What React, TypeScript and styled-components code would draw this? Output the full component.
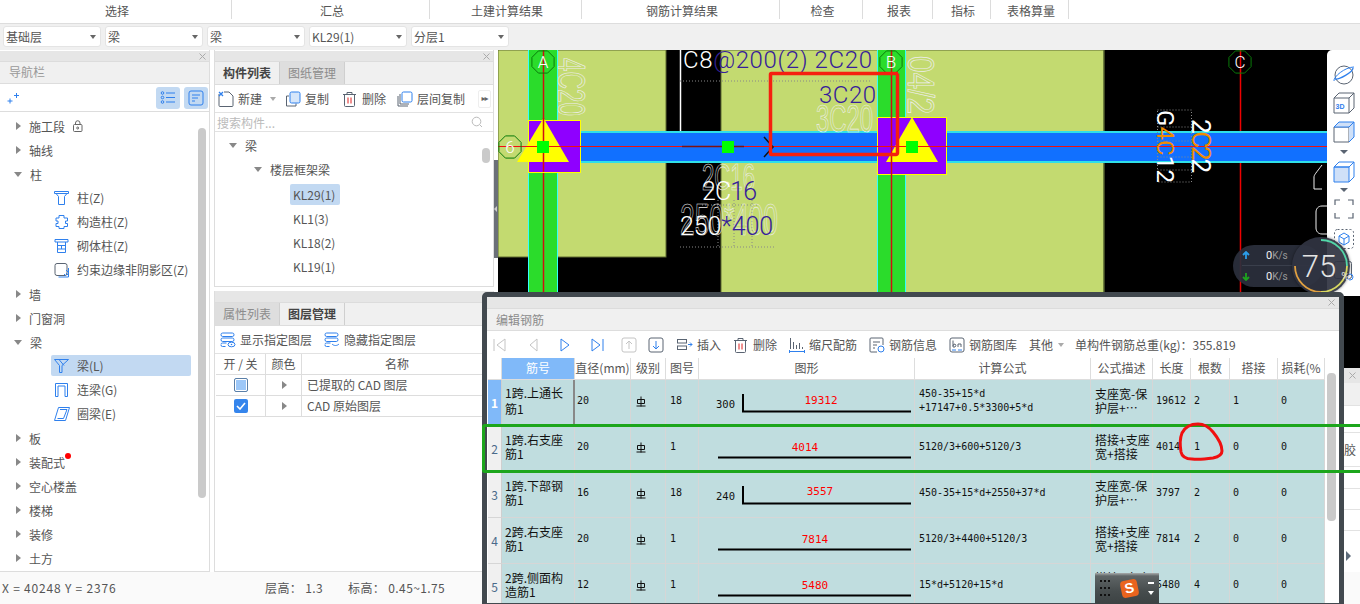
import React from "react";
import styled, { createGlobalStyle } from "styled-components";

const Global = createGlobalStyle`
  html, body { margin: 0; padding: 0; background: #fff; }
  * { box-sizing: border-box; }
  body { font-family: "Noto Sans CJK SC", "Liberation Sans", sans-serif; font-size: 12px; color: #555; }
`;

const Page = styled.div`
  position: relative; width: 1360px; height: 604px; overflow: hidden;
  display: flex; flex-direction: column; background: #fff;
`;
const TopBar = styled.div`display: flex; height: 24px; background: #fff; border-bottom: 1px solid #ddd; flex: none;`;
const TopCell = styled.div<{ $w: number }>`
  width: ${p => p.$w}px; height: 19px; line-height: 22px; text-align: center; color: #555; padding-left: 3px;
  border-right: 1px solid #dcdcdc; font-size: 12px;
`;
const SelectBar = styled.div`display: flex; gap: 4px; height: 26px; padding: 2px 3px 0; background: #f0f0f0; flex: none;`;
const Select = styled.div`
  position: relative; width: 98px; height: 21px; background: #fff; border-radius: 3px; border: 1px solid #e4e4e4;
  line-height: 19px; padding-left: 2px; font-size: 12px; color: #555;
  &::after { content: ""; position: absolute; right: 4px; top: 8px; border: 3px solid transparent; border-top: 4px solid #666; border-bottom: 0; }
`;
const Main = styled.div`display: flex; height: 522px; flex: none;`;
const Panel = styled.div`display: flex; flex-direction: column; border: 1px solid #ddd; border-top: 0; background: #fff; overflow: hidden;`;
const LeftPanel = styled(Panel)`width: 210px; border-left: 0; flex: none; position: relative;`;
const MidCol = styled.div`width: 280px; margin-left: 4px; display: flex; flex-direction: column; gap: 4px; flex: none;`;
const UpperPanel = styled(Panel)`height: 237px; position: relative; flex: none;`;
const LowerPanel = styled(Panel)`flex: 1;`;
const Strip = styled.div<{ $flush?: boolean }>`
  display: flex; align-items: center; justify-content: flex-end; height: ${p => (p.$flush ? 12 : 11)}px; margin-top: ${p => (p.$flush ? 0 : 1)}px;
  background: #e6e6e6; border-bottom: 1px solid #dcdcdc; flex: none; padding-right: 3px;
`;
const CloseX = () => (
  <svg width="7" height="7" viewBox="0 0 7 7" style={{ display: "block", flex: "none" }}>
    <path d="M.5.5l6 6M6.500.5l-6 6" stroke="#aaa" />
  </svg>
);
const NavTitle = styled.div`height: 22px; background: #f0f0f0; border-bottom: 1px solid #ddd; padding-left: 9px; line-height: 20px; color: #999; flex: none;`;
const NavTools = styled.div`display: flex; align-items: center; height: 28px; padding: 0 1px 0 6px; border-bottom: 1px solid #ddd; flex: none;`;
const NavToggle = styled.div<{ $ml?: number }>`
  width: 24px; height: 22px; margin-left: ${p => p.$ml ?? 4}px; background: #c2d9f2; border-radius: 3px;
  display: flex; align-items: center; justify-content: center;
`;
const Tree = styled.div<{ $top: number }>`padding-top: ${p => p.$top}px; flex: 1;`;
const GroupRow = styled.div<{ $indent?: number }>`
  display: flex; align-items: center; gap: 8px; height: 24px; padding-left: ${p => p.$indent ?? 14}px; color: #555;
`;
const Caret = styled.span<{ $open?: boolean }>`
  width: 7px; flex: none; height: 0; display: block;
  ${p => p.$open
    ? "border-left: 4px solid transparent; border-right: 4px solid transparent; border-top: 5px solid #888;"
    : "border-top: 4px solid transparent; border-bottom: 4px solid transparent; border-left: 5px solid #888; margin-left: 2px; width: 5px;"}
`;
const ChildWrap = styled.div<{ $left?: number; $pt?: number }>`height: 24px; padding: ${p => p.$pt ?? 1}px 0 0 ${p => p.$left ?? 51}px;`;
const Chip = styled.div<{ $on?: boolean; $w?: number }>`
  display: flex; align-items: center; gap: 7px; width: ${p => p.$w ?? 140}px; height: 21px; padding-left: 3px; border-radius: 2px;
  background: ${p => (p.$on ? "#c2d9f2" : "transparent")};
`;
const Dotted = styled.span`
  position: relative;
  &::after { content: ""; position: absolute; right: -6px; top: -1px; width: 6px; height: 6px; border-radius: 50%; background: #f00; }
`;
const Scroll = styled.div<{ $x: number; $y: number; $h: number }>`
  position: absolute; left: ${p => p.$x}px; top: ${p => p.$y}px; width: 8px; height: ${p => p.$h}px; border-radius: 4px; background: #cacaca;
`;
const Tabs = styled.div`display: flex; height: 23px; background: #f0f0f0; border-bottom: 1px solid #ddd; flex: none;`;
const Tab = styled.div<{ $on?: boolean }>`
  width: 65px; height: 22px; text-align: center; line-height: 21px; font-size: 12px;
  background: ${p => (p.$on ? "#f0f0f0" : "#dedede")}; color: ${p => (p.$on ? "#444" : "#8c8c8c")};
  font-weight: ${p => (p.$on ? 700 : 400)}; border-right: 1px solid #cfcfcf;
`;
const Toolbar = styled.div<{ $h: number; $plain?: boolean }>`
  display: flex; align-items: center; height: ${p => p.$h}px; background: #fff; flex: none; color: #555;
  border-bottom: ${p => (p.$plain ? "0" : "1px solid #e2e2e2")};
`;
const ToolItem = styled.div<{ $ml?: number }>`display: flex; align-items: center; gap: 4px; margin-left: ${p => p.$ml ?? 0}px; white-space: nowrap; flex: none;`;
const SmallCaret = styled.span<{ $ml: number }>`
  margin-left: ${p => p.$ml}px; flex: none; border-left: 3px solid transparent; border-right: 3px solid transparent; border-top: 4px solid #aaa;
`;
const MoreBtn = styled.div`
  margin-left: 13px; width: 13px; height: 18px; border: 1px solid #eee; border-radius: 2px; font-size: 8px; line-height: 16px; text-align: center; color: #666;
  font-family: "DejaVu Sans", sans-serif; letter-spacing: -1px; flex: none;
`;
const Search = styled.div`
  display: flex; align-items: center; justify-content: space-between; height: 19px; padding: 0 10px 0 2px; border-bottom: 1px solid #e2e2e2; color: #bbb; flex: none;
`;
const LayerGrid = styled.div`display: grid; grid-template-columns: 50px 36px 1fr; padding-left: 1px;`;
const LayerCell = styled.div<{ $center?: boolean }>`
  height: 21px; display: flex; align-items: center; justify-content: ${p => (p.$center ? "center" : "flex-start")};
  padding: 0 0 1px ${p => (p.$center ? 0 : 5)}px; border-right: 1px solid #ddd; border-bottom: 1px solid #ddd; color: #555; white-space: pre;
`;
const CheckBox = styled.span<{ $on?: boolean }>`
  width: 14px; height: 14px; border-radius: 2px; display: flex; align-items: center; justify-content: center;
  background: ${p => (p.$on ? "#3585ec" : "#9cc7f8")}; border: ${p => (p.$on ? "0" : "1px solid #5a7fa8")};
  ${p => (p.$on ? "" : "box-shadow: inset 0 0 0 1px #fff;")}
`;
const Divider = styled.div`width: 4px; flex: none; height: 100%;`;
const Handle = styled.div`
  width: 4px; height: 98px; margin-top: 110px; background: #6b7078; display: flex; align-items: center;
  &::before { content: ""; border-top: 3px solid transparent; border-bottom: 3px solid transparent; border-right: 3px solid #ccc; }
`;
const RightCol = styled.div`flex: 1; display: flex; flex-direction: column; min-width: 0; position: relative;`;
const CanvasSvg = styled.svg`display: block; width: 862px; height: 318px; background: #000; flex: none;`;
const SidePanel = styled.div`flex: 1; background: #fff; padding-left: 846px; display: flex; flex-direction: column;`;
const SideStrip = styled.div`height: 15px; background: #e6e6e6; display: flex; align-items: center; justify-content: center; flex: none;`;
const SideHead = styled.div`height: 23px; background: #f0f0f0; border-bottom: 1px solid #e2e2e2; flex: none;`;
const SideRow = styled.div<{ $h: number }>`
  height: ${p => p.$h}px; border-bottom: 1px solid #e2e2e2; font-size: 12px; color: #555; white-space: nowrap; overflow: hidden; padding-top: 9px; line-height: 16px; flex: none;
`;
const SideCaret = styled.span`display: block; margin: 20px 0 0 2px; width: 0; border-top: 5px solid transparent; border-bottom: 5px solid transparent; border-left: 5px solid #5d6b7a;`;
const SideToolbar = styled.div`
  position: absolute; right: 0; top: 0; width: 33px; height: 246px; background: #fff; border-radius: 5px 0 0 5px;
  display: flex; flex-direction: column; align-items: center; padding-top: 14px;
`;
const ToolSlot = styled.div<{ $h: number }>`height: ${p => p.$h}px; flex: none; display: flex; align-items: flex-start; justify-content: center;`;
const TinyDown = styled.span`display: block; width: 0; border-left: 4px solid transparent; border-right: 4px solid transparent; border-top: 4px solid #5a6472;`;
const Speed = styled.div`
  position: absolute; left: 735px; top: 195px; width: 90px; height: 42px; border-radius: 21px; background: rgba(43,47,60,.93);
  display: flex; flex-direction: column; padding-left: 9px; color: #999; font-size: 10px;
`;
const SpeedRow = styled.div<{ $line?: boolean }>`
  height: 21px; display: flex; align-items: center; gap: 16px; ${p => (p.$line ? "border-bottom: 1px solid #3a3f4c;" : "")}
`;
const SpeedVal = styled.span`color: #999; font-family: "Roboto", sans-serif; b { color: #eee; font-weight: 400; font-size: 11px; }`;
const Gauge = styled.div`
  position: absolute; left: 794px; top: 187px; width: 58px; height: 58px; border-radius: 50%; background: rgba(48,52,66,.93);
  box-shadow: 0 0 3px rgba(0,0,0,.5);
  display: flex; align-items: center; justify-content: center;
`;
const GaugeText = styled.div`
  position: relative; color: #e4e4e4; font: 300 31px/1 "Roboto", sans-serif; padding-right: 4px;
  span { position: absolute; right: -9px; bottom: 0; font-size: 11px; font-weight: 400; }
`;
const GaugeRing = styled.svg`position: absolute; inset: 0;`;
const Status = styled.div`
  height: 32px; flex: none; background: #fafafa; display: flex; align-items: center; color: #555; font-size: 12px; letter-spacing: .4px; white-space: pre; padding: 0 0 2px 2px;
`;
const StatusItem = styled.span<{ $w: number; $wide?: boolean }>`width: ${p => p.$w}px; flex: none; ${p => (p.$wide ? "letter-spacing: .8px;" : "")}`;

const Dialog = styled.div`
  position: absolute; left: 482px; top: 292px; width: 862px; height: 312px; background: #fff; overflow: hidden;
  border: 5px solid #42494f; border-bottom-width: 1px; border-radius: 5px 5px 0 0; display: flex; flex-direction: column;
`;
const DialogStrip = styled.div`display: flex; align-items: center; justify-content: flex-end; height: 12px; background: #e6e6e6; border-bottom: 1px solid #dcdcdc; padding-right: 4px; flex: none;`;
const DialogTitle = styled.div`height: 22px; background: #f0f0f0; border-bottom: 1px solid #ddd; padding-left: 9px; line-height: 22px; color: #8c8c8c; flex: none;`;
const GridRow = styled.div<{ $h: number }>`
  display: grid; height: ${p => p.$h}px; flex: none; margin-left: 1px; width: 837px;
  grid-template-columns: 14px 73px 56px 35px 33px 216px 176px 62px 38px 39px 48px 47px;
`;
const Th = styled.div<{ $on?: boolean }>`
  background: ${p => (p.$on ? "#80b9f9" : "#fff")}; color: ${p => (p.$on ? "#fff" : "#555")};
  border-right: 1px solid #ddd; border-bottom: 1px solid #ddd; text-align: center; line-height: 20px; white-space: nowrap; overflow: hidden; font-size: 12px;
`;
const RowHead = styled.div<{ $on?: boolean }>`
  background: ${p => (p.$on ? "#80b9f9" : "#f0f0f0")}; color: ${p => (p.$on ? "#fff" : "#4a6a8a")}; font-weight: ${p => (p.$on ? 700 : 400)};
  display: flex; align-items: center; justify-content: center; border-right: 1px solid #cfcfcf; border-bottom: 1px solid #d6d6d6; font-size: 12px;
`;
const Td = styled.div<{ $pl?: number; $mark?: boolean; $lh?: number; $flat?: boolean }>`
  background: #c0dddf; border-right: 1px solid #d6d6d6; border-bottom: 1px solid #d6d6d6; color: #111;
  display: flex; flex-direction: column; justify-content: center; align-items: flex-start; padding: 0 0 ${p => (p.$flat ? 0 : 3)}px ${p => p.$pl ?? 3}px;
  font-size: 12px; line-height: ${p => p.$lh ?? 14}px; white-space: nowrap; overflow: hidden;
  ${p => (p.$mark ? "border-right: 2px solid #888;" : "")}
`;
const Mono = styled.span`font-family: "DejaVu Sans Mono", monospace; font-size: 10px; letter-spacing: 0;`;
const ShapeSvg = styled.svg`display: block;`;
const DlgScroll = styled(Scroll)`width: 9px; border-radius: 4px;`;
const Overlay = styled.svg`position: absolute; left: 0; top: 0; pointer-events: none;`;
const Sogou = styled.div`
  position: absolute; left: 1095px; top: 573px; width: 64px; height: 31px; display: flex; align-items: center;
  background: linear-gradient(#a8acac 0, #5f6566 3px, #464c4d 60%, #3c4243);
`;
const SogouLogo = styled.div`
  width: 17px; height: 17px; margin-left: 7px; background: #e9641e; border-radius: 4px; transform: rotate(-12deg); color: #fff; font: 700 14px/17px "Liberation Sans", sans-serif; text-align: center; flex: none;
`;
const SogouSide = styled.div`margin-left: 10px; display: flex; flex-direction: column; gap: 7px; align-items: center;`;

const B = "#2f80ed", D = "#5a6472";
const Ico = ({ children, w = 16, h = 16 }: { children: React.ReactNode; w?: number; h?: number }) => (
  <svg width={w} height={h} viewBox={`0 0 ${w} ${h}`} fill="none" strokeWidth={1} style={{ flex: "none", display: "block" }}>{children}</svg>
);

const Sp = () => <Ico><path d="M10.500 3v5M8 5.500h5M4 8.500v5M1.500 11h5" stroke={B} /></Ico>;
const ListI = () => <Ico><circle cx="2.500" cy="3" r="1.300" stroke={B} /><circle cx="2.500" cy="7.500" r="1.300" stroke={B} /><circle cx="2.500" cy="12" r="1.300" stroke={B} /><path d="M6 3h9M6 7.500h9M6 12h9" stroke={B} /></Ico>;
const DetailI = () => <Ico><rect x="1" y="1" width="14" height="14" rx="2" stroke={B} /><path d="M4 5h8M4 8h6M4 11h3" stroke={B} /></Ico>;
const ColI = () => <Ico><path d="M.5 1.500h14v2h-14zM2 3.500l2.500 3v8h6v-8l2.500-3" stroke={B} /></Ico>;
const StructI = () => <Ico><path d="M5 1.500h5v2.500h3.500v3h-2v2.500h2v3H10v2H5v-2H2v-3h2V7H2V4h3z" stroke={B} /></Ico>;
const BrickI = () => <Ico><path d="M1 1.500h13v2.500H1zM3.500 4v10.500h8V4M3.500 7.500h8M3.500 11h8M7.500 7.500V11" stroke={B} /></Ico>;
const EdgeI = () => <Ico><rect x="1" y="1.500" width="12" height="12" rx="2" stroke={D} /><path d="M14.500 6v9H4.500M12 11l2 2M10 12l2 2M12 8l2 2" stroke={B} /></Ico>;
const BeamI = () => <Ico><path d="M.5 1.500h14l-6.500 6v7H5.500V7.500zM5 1.500l5 6" stroke={B} /></Ico>;
const LinkI = () => <Ico><path d="M1.500 14.500V1.500h12v13h-2.500V4H4v10.500z" stroke={B} /></Ico>;
const RingI = () => <Ico><path d="M4.500 1.500h11l-4 13H.500zM6 3.500h7L9.500 12.500H3.500" stroke={B} /></Ico>;
const LockI = () => <Ico w={10} h={12}><rect x=".5" y="4.500" width="8.500" height="7" rx="1" stroke="#666" /><path d="M2.500 4.500V3a2.200 2.200 0 0 1 4.500 0v1.500" stroke="#666" /><circle cx="4.700" cy="8" r="1" stroke="#666" /></Ico>;
const NewI = () => <Ico><path d="M1 3v11.500a1 1 0 0 0 1 1h12a1 1 0 0 0 1-1V5l-4-4H6" stroke={D} /><path d="M1 1l4 4M5 1L1 5" stroke={B} strokeWidth={1.300} /></Ico>;
const CopyI = () => <Ico><path d="M4 5H1.500v10h9.500v-2.500" stroke={D} /><rect x="5" y="1" width="10" height="11" rx="1.500" fill="#d6e6fa" stroke={B} /></Ico>;
const TrashI = () => <Ico><path d="M1 3.500h13M5 3.500V1.500h5v2M2.500 3.500v11a1 1 0 0 0 1 1h8a1 1 0 0 0 1-1v-11" stroke={D} /><path d="M6 6.500v6M9 6.500v6" stroke="#e02020" /></Ico>;
const LayerCopyI = () => <Ico><path d="M1 5v10h10M3 3v10h9" stroke={D} /><rect x="5" y="1" width="10" height="10" rx="1.500" stroke={B} /></Ico>;
const SearchI = () => <Ico w={12} h={12}><circle cx="5.500" cy="5.500" r="4.300" stroke="#bbb" /><path d="M8.700 8.700l2.300 2.300" stroke="#bbb" /></Ico>;
const ShowI = ({ hide }: { hide?: boolean }) => (
  <Ico>
    <rect x="1" y="1" width="13" height="3.500" rx="1.700" stroke={B} />
    <rect x="1" y="6" width="13" height="3.500" rx="1.700" stroke={B} />
    <path d="M1 12.500a1.500 1.500 0 0 1 1.500-1.500h4" stroke={B} /><path d="M1 13a1.500 1.500 0 0 0 1.500 1.500h3" stroke={B} />
    {hide ? <path d="M8 12c2 2 5 2 7 0" stroke={B} /> : <><ellipse cx="11.500" cy="12.500" rx="3.500" ry="2.300" stroke={B} /><circle cx="11.500" cy="12.500" r=".8" fill={B} /></>}
  </Ico>
);
const G = "#c4c4c4";
const FirstI = ({ c }: { c: string }) => <Ico><path d="M2 2v12M13 2L5 8l8 6z" stroke={c} /></Ico>;
const PrevI = ({ c }: { c: string }) => <Ico><path d="M11 2L4 8l7 6z" stroke={c} /></Ico>;
const NextI = ({ c }: { c: string }) => <Ico><path d="M4 2l8 6-8 6z" stroke={c} /></Ico>;
const LastI = ({ c }: { c: string }) => <Ico><path d="M14 2v12M3 2l8 6-8 6z" stroke={c} /></Ico>;
const UpI = () => <Ico><rect x="1" y="1" width="14" height="14" rx="2" stroke={G} /><path d="M8 12V4.500M5 7l3-3 3 3" stroke={G} /></Ico>;
const DownI = () => <Ico><rect x="1" y="1" width="14" height="14" rx="2" stroke={D} /><path d="M8 4v7.500M5 9l3 3 3-3" stroke={B} /></Ico>;
const InsertI = () => <Ico><rect x=".5" y="2.500" width="9" height="3.500" stroke={D} /><rect x=".5" y="9" width="9" height="3.500" stroke={D} /><path d="M11 7.500h4M13 5.500l2 2-2 2" stroke={B} /></Ico>;
const ScaleI = () => <Ico><path d="M1.500 1v11M4.500 5v7M7.500 8v4M10.500 6v6M13.500 10v2" stroke={D} /><path d="M.5 14.500h15M.5 13v3M15.500 13v3" stroke={B} /></Ico>;
const InfoI = () => <Ico><path d="M8 15H2a1 1 0 0 1-1-1V2a1 1 0 0 1 1-1h11a1 1 0 0 1 1 1v6" stroke={D} /><path d="M4 5h7M4 8h4M4 11h2" stroke={D} /><circle cx="12" cy="12" r="3" stroke={B} /></Ico>;
const LibI = () => <Ico><rect x="1" y="1" width="14" height="14" rx="2" stroke={D} /><path d="M4 9a2 2 0 0 1 2-2h0a2 2 0 0 1 0 3H4zM4 3.500V9M9 10V7h3v3" stroke={D} /><path d="M3 13h4M9 13h4" stroke={B} /></Ico>;
const RebarMark = () => (
  <svg width="10" height="11" viewBox="0 0 10 11" style={{ display: "block" }}>
    <path d="M5 .5v10M1.500 3.500h7v4h-7zM.5 10h9" stroke="#111" fill="none" />
  </svg>
);

const Octa = ({ cx, cy, r = 12, label }: { cx: number; cy: number; r?: number; label: string }) => {
  const pts = Array.from({ length: 8 }, (_, i) => {
    const a = (Math.PI / 8) * (2 * i + 1);
    return `${cx + r * Math.cos(a)},${cy + r * Math.sin(a)}`;
  }).join(" ");
  return (
    <>
      <polygon points={pts} fill="none" stroke="#0a7a0a" />
      <text x={cx} y={cy + 6} textAnchor="middle" fontSize="17" fill="#fff" fontFamily="Roboto" fontWeight="300">{label}</text>
    </>
  );
};
const Thin = ({ x, y, w, size, children, rotate }: { x: number; y: number; w: number; size: number; children: string; rotate?: boolean }) => (
  <text x={x} y={y} textLength={w} lengthAdjust="spacingAndGlyphs" fontSize={size} fill="none" stroke="#eee" strokeWidth=".7"
    fontFamily="Liberation Sans" transform={rotate ? `rotate(90 ${x} ${y})` : undefined}>{children}</text>
);
const Col = ({ x, w }: { x: number; w: number }) => (
  <>
    <rect x={x} y="50" width={w} height="318" fill="#2bdc2b" />
    <path d={`M${x + .5} 50V368M${x + w - .5} 50V368`} stroke="#3ff" />
  </>
);
const BLUE = "#36209a";

const Canvas = () => (
  <CanvasSvg viewBox="498 50 862 318" fontFamily="Roboto" fontWeight="300">
    <rect x="498" y="50" width="168" height="207" fill="#c3da70" stroke="#5e6b30" />
    <rect x="721" y="50" width="383" height="318" fill="#c3da70" stroke="#5e6b30" />
    <Col x={528} w={30} />
    <Col x={877} w={29} />
    <path d="M680.500 50v81" stroke="#fff" strokeWidth="1.500" />
    <path d="M1104 50v318" stroke="#4a5a2a" />
    <path d="M1240.500 50V368" stroke="#e00" strokeWidth="1.500" />
    <path d="M543.500 50V368M891.500 50V368" stroke="#d01010" strokeWidth="1.500" />
    <rect x="581" y="131" width="779" height="32" fill="#1170ff" />
    <path d="M581 132h779M581 162h779" stroke="#2fe0e8" strokeWidth="2" />
    <path d="M1322 165c-6 8-8 10-8 12v12h8M1328 206h-6c-4 0-6 3-6 6v16c0 3 2 6 6 6h6" stroke="#eee" fill="none" />
    <rect x="528.500" y="120.500" width="52" height="52" fill="#8f00ff" stroke="#ff0" />
    <rect x="877.500" y="117.500" width="69" height="57" fill="#8f00ff" stroke="#ff0" />
    <polygon points="543.500,118 517,162 569,162" fill="#ff0" />
    <polygon points="912,117 886,162 938,162" fill="#ff0" />
    <path d="M543.500 118V172M891.500 117V175" stroke="#d01010" strokeWidth="1.500" />
    <path d="M498 146.500h862" stroke="#f01010" strokeWidth="1.200" />
    <path d="M682 146.500h62" stroke="#801010" strokeWidth="1.500" />
    <path d="M764 137l9 10-9 10" stroke="#111" fill="none" strokeWidth="1.500" />
    <rect x="537" y="141" width="12" height="12" fill="#0f0" />
    <rect x="722" y="141" width="12" height="12" fill="#0f0" />
    <rect x="906" y="141" width="12" height="12" fill="#0f0" />
    <Octa cx={543} cy={62} label="A" />
    <Octa cx={510} cy={147} label="6" />
    <Octa cx={891} cy={62} label="B" />
    <Octa cx={1240} cy={62} label="C" />
    <path d="M680 81h190M1157.500 110h34v72h-34zM1157.500 127h34M1157.500 141h34M1157.500 157h34M1157.500 170h34" stroke="#888" strokeDasharray="1 2" fill="none" />
    <path d="M680 247h96M702 205h56M718 200v47M734 200v47M752 200v47" stroke="#888" strokeDasharray="1 2" fill="none" />
    <Thin x={558} y={58} w={58} size={38} rotate>4C20</Thin>
    <Thin x={908} y={56} w={58} size={36} rotate>04/2</Thin>
    <Thin x={816} y={132} w={57} size={38}>3C20</Thin>
    <Thin x={702} y={190} w={53} size={36}>2C16</Thin>
    <Thin x={680} y={235} w={98} size={44}>250*400</Thin>
    <text x="683" y="68" fontSize="24" textLength="189" fill={BLUE}><tspan fill="#fff">C8</tspan>@200(2) 2C20</text>
    <text x="819" y="103" fontSize="24" textLength="57" fill={BLUE}>3C20</text>
    <text x="702" y="200" fontSize="25" textLength="55" fill={BLUE}><tspan fill="#fff">2C</tspan>16</text>
    <text x="680" y="235" fontSize="25" textLength="93" fill={BLUE}><tspan fill="#fff">250</tspan>*400</text>
    <text x="1157" y="110" fontSize="24" fontWeight="400" textLength="73" fill="#fff" transform="rotate(90 1157 110)"><tspan>G</tspan><tspan fill="#f08c00">4C</tspan><tspan>12</tspan></text>
    <text x="1192" y="119" fontSize="26" fontWeight="400" textLength="54" fill="#fff" transform="rotate(90 1192 119)"><tspan>2</tspan><tspan fill="#f08c00">C2</tspan><tspan>2</tspan></text>
  </CanvasSvg>
);

const groups: { t: React.ReactNode; open?: boolean; kids?: [React.ReactNode, string, boolean?][] }[] = [
  { t: <><span>施工段</span><LockI /></> },
  { t: "轴线" },
  { t: "柱", open: true, kids: [[<ColI />, "柱(Z)"], [<StructI />, "构造柱(Z)"], [<BrickI />, "砌体柱(Z)"], [<EdgeI />, "约束边缘非阴影区(Z)"]] },
  { t: "墙" }, { t: "门窗洞" },
  { t: "梁", open: true, kids: [[<BeamI />, "梁(L)", true], [<LinkI />, "连梁(G)"], [<RingI />, "圈梁(E)"]] },
  { t: "板" }, { t: <Dotted>装配式</Dotted> }, { t: "空心楼盖" }, { t: "楼梯" }, { t: "装修" }, { t: "土方" },
];

const rows = [
  { n: ["1跨.上通长", "筋1"], d: "20", no: "18", f: ["450-35+15*d", "+17147+0.5*3300+5*d"], desc: ["支座宽-保", "护层+…"], len: "19612", c: "2", lap: "1", val: "19312", vx: 122, vy: 24, hook: "300" },
  { n: ["1跨.右支座", "筋1"], d: "20", no: "1", f: ["5120/3+600+5120/3"], desc: ["搭接+支座", "宽+搭接"], len: "4014", c: "1", lap: "0", val: "4014", vx: 106, vy: 25 },
  { n: ["1跨.下部钢", "筋1"], d: "16", no: "18", f: ["450-35+15*d+2550+37*d"], desc: ["支座宽-保", "护层+…"], len: "3797", c: "2", lap: "0", val: "3557", vx: 121, vy: 23, hook: "240" },
  { n: ["2跨.右支座", "筋1"], d: "20", no: "1", f: ["5120/3+4400+5120/3"], desc: ["搭接+支座", "宽+搭接"], len: "7814", c: "2", lap: "0", val: "7814", vx: 116, vy: 25 },
  { n: ["2跨.侧面构", "造筋1"], d: "12", no: "1", f: ["15*d+5120+15*d"], desc: ["搭接+支座", "宽+搭接"], len: "5480", c: "4", lap: "0", val: "5480", vx: 116, vy: 25 },
];

const Shape = ({ val, vx, vy, hook }: { val: string; vx: number; vy: number; hook?: string }) => (
  <ShapeSvg width="215" height="45" viewBox="0 0 215 45">
    {hook
      ? <path d="M44 14v17.500h168" stroke="#000" strokeWidth="2" fill="none" />
      : <path d="M19 31.500h193" stroke="#000" strokeWidth="2" />}
    {hook && <text x="17" y="28" fontSize="10.500" fontFamily="DejaVu Sans Mono" fill="#111">{hook}</text>}
    <text x={vx} y={vy} textAnchor="middle" fontSize="11" fontFamily="DejaVu Sans Mono" fill="#f00">{val}</text>
  </ShapeSvg>
);

export default function App() {
  return (
    <Page>
      <Global />
      <TopBar>
        {[["选择", 232], ["汇总", 198], ["土建计算结果", 152], ["钢筋计算结果", 198], ["检查", 83], ["报表", 70], ["指标", 58], ["表格算量", 78]].map(([t, w]) => (
          <TopCell key={t as string} $w={(w as number)}>{t}</TopCell>
        ))}
      </TopBar>
      <SelectBar>
        {["基础层", "梁", "梁", "KL29(1)", "分层1"].map((t, i) => <Select key={i}>{t}</Select>)}
      </SelectBar>
      <Main>
        <LeftPanel>
          <Strip><CloseX /></Strip>
          <NavTitle>导航栏</NavTitle>
          <NavTools>
            <Sp />
            <NavToggle $ml={134}><ListI /></NavToggle>
            <NavToggle><DetailI /></NavToggle>
          </NavTools>
          <Tree $top={2}>
            {groups.map((g, i) => (
              <React.Fragment key={i}>
                <GroupRow><Caret $open={g.open} />{g.t}</GroupRow>
                {g.kids?.map(([ic, t, on], j) => (
                  <ChildWrap key={j}><Chip $on={on}>{ic}<span>{t}</span></Chip></ChildWrap>
                ))}
              </React.Fragment>
            ))}
          </Tree>
          <Scroll $x={198} $y={78} $h={370} />
        </LeftPanel>
        <MidCol>
          <UpperPanel>
            <Strip><CloseX /></Strip>
            <Tabs><Tab $on>构件列表</Tab><Tab>图纸管理</Tab></Tabs>
            <Toolbar $h={28}>
              <ToolItem $ml={3}><NewI />新建</ToolItem><SmallCaret $ml={8} />
              <ToolItem $ml={9}><CopyI />复制</ToolItem>
              <ToolItem $ml={13}><TrashI />删除</ToolItem>
              <ToolItem $ml={11}><LayerCopyI />层间复制</ToolItem>
              <MoreBtn>▸▸</MoreBtn>
            </Toolbar>
            <Search>搜索构件...<SearchI /></Search>
            <Tree $top={1}>
              <GroupRow $indent={14}><Caret $open />梁</GroupRow>
              <GroupRow $indent={39}><Caret $open />楼层框架梁</GroupRow>
              {["KL29(1)", "KL1(3)", "KL18(2)", "KL19(1)"].map((t, i) => (
                <ChildWrap key={t} $left={75} $pt={3}>
                  <Chip $on={i === 0} $w={50}>{t}</Chip>
                </ChildWrap>
              ))}
            </Tree>
            <Scroll $x={267} $y={98} $h={15} />
          </UpperPanel>
          <LowerPanel>
            <Strip $flush />
            <Tabs><Tab>属性列表</Tab><Tab $on>图层管理</Tab></Tabs>
            <Toolbar $h={28}>
              <ToolItem $ml={5}><ShowI />显示指定图层</ToolItem>
              <ToolItem $ml={12}><ShowI hide />隐藏指定图层</ToolItem>
            </Toolbar>
            <LayerGrid>
              <LayerCell $center>开 / 关</LayerCell><LayerCell $center>颜色</LayerCell><LayerCell $center>名称</LayerCell>
              <LayerCell $center><CheckBox /></LayerCell><LayerCell $center><Caret /></LayerCell><LayerCell>已提取的 CAD 图层</LayerCell>
              <LayerCell $center>
                <CheckBox $on><svg width="10" height="8" viewBox="0 0 10 8"><path d="M1 4l3 3 5-6" stroke="#fff" strokeWidth="1.600" fill="none" /></svg></CheckBox>
              </LayerCell>
              <LayerCell $center><Caret /></LayerCell><LayerCell>CAD 原始图层</LayerCell>
            </LayerGrid>
          </LowerPanel>
        </MidCol>
        <Divider><Handle /></Divider>
        <RightCol>
          <Canvas />
          <SidePanel>
            <SideStrip><CloseX /></SideStrip>
            <SideHead />
            <SideRow $h={27} />
            <SideRow $h={34}>胶</SideRow>
            <SideRow $h={22} />
            <SideRow $h={21} />
            <SideRow $h={21} />
            <SideCaret />
          </SidePanel>
          <SideToolbar>
            <ToolSlot $h={28}>
              <svg width="22" height="22" viewBox="0 0 22 22" fill="none"><circle cx="11" cy="11" r="9" stroke={D} /><path d="M2 15C6 16 20 8 20 4" stroke={B} strokeWidth="1.300" /><path d="M1 17C0 13 12 3 21 3" stroke={B} /></svg>
            </ToolSlot>
            <ToolSlot $h={29}>
              <svg width="22" height="22" viewBox="0 0 22 22" fill="none"><path d="M1 6h15v15H1zM1 6l5-5h15v15l-5 5M16 6l5-5" stroke={D} /><text x="2.500" y="17" fontSize="7" fontWeight="700" fill={B} fontFamily="Liberation Sans">3D</text></svg>
            </ToolSlot>
            <ToolSlot $h={29}>
              <svg width="22" height="22" viewBox="0 0 22 22" fill="none"><path d="M1 6h15v15H1z" stroke={D} /><path d="M1 6l5-5h15l-5 5zM16 6l5-5v15l-5 5" stroke={B} fill="#cfe0f8" /></svg>
            </ToolSlot>
            <ToolSlot $h={11}><TinyDown /></ToolSlot>
            <ToolSlot $h={27}>
              <svg width="22" height="22" viewBox="0 0 22 22" fill="none"><path d="M1 6h15v15H1z" fill="#cfe0f8" stroke={B} /><path d="M1 6l5-5h15l-5 5zM16 6l5-5v15l-5 5" stroke={B} /></svg>
            </ToolSlot>
            <ToolSlot $h={11}><TinyDown /></ToolSlot>
            <ToolSlot $h={30}>
              <svg width="20" height="20" viewBox="0 0 20 20" fill="none"><path d="M1 6V1h5M14 1h5v5M19 14v5h-5M6 19H1v-5" stroke={D} strokeWidth="1.200" /></svg>
            </ToolSlot>
            <ToolSlot $h={32}>
              <svg width="20" height="20" viewBox="0 0 20 20" fill="none"><rect x=".5" y=".5" width="19" height="19" rx="3" stroke={D} strokeDasharray="2 2" /><path d="M10 4l5 3v6l-5 3-5-3V7zM5 7l5 3 5-3M10 10v6" stroke={B} /></svg>
            </ToolSlot>
            <ToolSlot $h={20}>
              <svg width="20" height="20" viewBox="0 0 20 20" fill="none"><rect x=".5" y=".5" width="17" height="17" rx="2" stroke={D} /><circle cx="16" cy="16" r="3" stroke={B} /></svg>
            </ToolSlot>
          </SideToolbar>
          <Speed>
            <SpeedRow $line>
              <svg width="8" height="8" viewBox="0 0 8 8"><path d="M4 8V1M1 4l3-3 3 3" stroke="#2c9ce8" strokeWidth="1.800" fill="none" /></svg>
              <SpeedVal><b>0</b>K/s</SpeedVal>
            </SpeedRow>
            <SpeedRow>
              <svg width="8" height="8" viewBox="0 0 8 8"><path d="M4 0v7M1 4l3 3 3-3" stroke="#1ea41e" strokeWidth="1.800" fill="none" /></svg>
              <SpeedVal><b>0</b>K/s</SpeedVal>
            </SpeedRow>
          </Speed>
          <Gauge>
            <GaugeRing width="58" height="58" viewBox="0 0 58 58" fill="none">
              <path d="M29 3A26 26 0 0 1 55 29" stroke="#52d6a8" strokeWidth="1.800" />
              <path d="M55 29A26 26 0 0 1 29 55" stroke="#d8d860" strokeWidth="1.800" />
              <path d="M29 55A26 26 0 0 1 3 29" stroke="#e0a040" strokeWidth="1.800" />
            </GaugeRing>
            <GaugeText>75<span>%</span></GaugeText>
          </Gauge>
        </RightCol>
      </Main>
      <Status>
        <StatusItem $w={263} $wide>X = 40248 Y = 2376</StatusItem>
        <StatusItem $w={83}>层高： 1.3</StatusItem>
        <span>标高： 0.45~1.75</span>
      </Status>

      <Dialog>
        <DialogStrip><CloseX /></DialogStrip>
        <DialogTitle>编辑钢筋</DialogTitle>
        <Toolbar $h={27} $plain>
          <ToolItem $ml={5}><FirstI c={G} /></ToolItem>
          <ToolItem $ml={18}><PrevI c={G} /></ToolItem>
          <ToolItem $ml={15}><NextI c={B} /></ToolItem>
          <ToolItem $ml={16}><LastI c={B} /></ToolItem>
          <ToolItem $ml={16}><UpI /></ToolItem>
          <ToolItem $ml={11}><DownI /></ToolItem>
          <ToolItem $ml={13}><InsertI />插入</ToolItem>
          <ToolItem $ml={12}><TrashI />删除</ToolItem>
          <ToolItem $ml={12}><ScaleI />缩尺配筋</ToolItem>
          <ToolItem $ml={12}><InfoI />钢筋信息</ToolItem>
          <ToolItem $ml={12}><LibI />钢筋图库</ToolItem>
          <ToolItem $ml={12}>其他</ToolItem><SmallCaret $ml={5} />
          <ToolItem $ml={11}>单构件钢筋总重(kg)：355.819</ToolItem>
        </Toolbar>
        <GridRow $h={22}>
          <Th /><Th $on>筋号</Th>
          {["直径(mm)", "级别", "图号", "图形", "计算公式", "公式描述", "长度", "根数", "搭接", "损耗(%"].map(t => <Th key={t}>{t}</Th>)}
        </GridRow>
        {rows.map((r, i) => (
          <GridRow $h={46} key={i}>
            <RowHead $on={i === 0}>{i + 1}</RowHead>
            <Td $mark={i === 0} $lh={i === 0 ? 16 : 14}>{r.n.map(l => <span key={l}>{l}</span>)}</Td>
            <Td $pl={2}><Mono>{r.d}</Mono></Td>
            <Td $pl={5}><RebarMark /></Td>
            <Td $pl={4}><Mono>{r.no}</Mono></Td>
            <Td $pl={0} $flat><Shape val={r.val} vx={r.vx} vy={r.vy} hook={r.hook} /></Td>
            <Td $pl={4}>{r.f.map(l => <Mono key={l}>{l}</Mono>)}</Td>
            <Td $pl={4}>{r.desc.map(l => <span key={l}>{l}</span>)}</Td>
            <Td><Mono>{r.len}</Mono></Td>
            <Td><Mono>{r.c}</Mono></Td>
            <Td><Mono>{r.lap}</Mono></Td>
            <Td><Mono>0</Mono></Td>
          </GridRow>
        ))}
        <DlgScroll $x={840} $y={76} $h={148} />
      </Dialog>

      <Overlay width="1360" height="604" viewBox="0 0 1360 604" fill="none">
        <path d="M1360 425.500H484.500a1 1 0 0 0-1 1V470.500a1 1 0 0 0 1 1H1360" stroke="#1ca61c" strokeWidth="3" />
        <path d="M898 73.500H771.500a1 1 0 0 0-1 1V153.500a1 1 0 0 0 1 1H896a1.500 1.500 0 0 0 1.500-1.500V73.500" stroke="#f5200f" strokeWidth="3.500" />
        <path d="M1182 433c3-6 9-9 16-9 7 0 11 3 15 8 5 6 9 12 9 19 0 4-4 6-9 7-7 1-14 2-21 1-6 0-10-2-11-7-1-6-1-14 1-19z" stroke="#f01010" strokeWidth="3" />
      </Overlay>

      <Sogou>
        <svg width="15" height="22" viewBox="0 0 15 22" style={{ marginLeft: 4, flex: "none" }}>
          <path d="M1 3h2M5 3h2M9 3h2M1 10h2M5 10h2M9 10h2M1 17h2M5 17h2M9 17h2" stroke="#111" strokeWidth="2" />
        </svg>
        <SogouLogo>S</SogouLogo>
        <SogouSide>
          <svg width="6" height="2" viewBox="0 0 6 2"><rect width="6" height="2" fill="#fff" /></svg>
          <svg width="6" height="4" viewBox="0 0 6 4"><path d="M0 0h6L3 4z" fill="#fff" /></svg>
        </SogouSide>
      </Sogou>
    </Page>
  );
}
